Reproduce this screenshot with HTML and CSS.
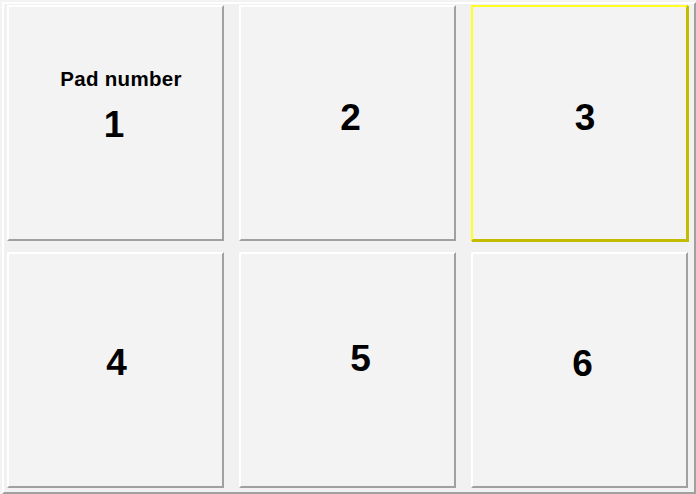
FILE: index.html
```html
<!DOCTYPE html>
<html>
<head>
<meta charset="utf-8">
<link rel="stylesheet" href="styles.css">
</head>
<body>
<div class="frame">
  <div class="grid">
    <div class="pad pad-1">
      <div class="label">Pad number</div>
      <div class="num">1</div>
    </div>
    <div class="pad pad-2"><div class="num">2</div></div>
    <div class="pad pad-3 selected"><div class="num">3</div></div>
    <div class="pad pad-4"><div class="num">4</div></div>
    <div class="pad pad-5"><div class="num">5</div></div>
    <div class="pad pad-6"><div class="num">6</div></div>
  </div>
</div>
</body>
</html>
```

FILE: styles.css
```css
html, body {
  margin: 0;
  padding: 0;
  background: #f3f3f3;
}
body {
  width: 696px;
  height: 494px;
  overflow: hidden;
  font-family: "Liberation Sans", Arial, sans-serif;
  color: #000;
}
.frame {
  margin: 2px 0 0 2px;
  width: 690px;
  height: 488px;
  border-style: solid;
  border-width: 2px;
  border-color: #ffffff #a0a0a0 #a0a0a0 #ffffff;
  background: #f1f1f1;
}
.grid {
  display: grid;
  grid-template-columns: 217px 217px 217px;
  grid-template-rows: 236px 236px;
  column-gap: 15px;
  row-gap: 11px;
  padding: 1px 0 0 3px;
}
.pad {
  box-sizing: border-box;
  background: #f3f3f3;
  border-style: solid;
  border-width: 2px;
  border-color: #ffffff #a0a0a0 #a0a0a0 #ffffff;
  display: flex;
  flex-direction: column;
  align-items: center;
  justify-content: center;
}
.pad.selected {
  border-color: #ffff22 #c2bb00 #c2bb00 #ffff22;
  box-shadow: 1px 1px 0 #c2bb00;
}
.num {
  font-size: 37px;
  font-weight: bold;
  line-height: 36px;
}
.label {
  font-size: 20.5px;
  font-weight: bold;
  line-height: 20px;
  letter-spacing: 0.3px;
}
.pad-1 .label { transform: translate(5.5px, -17px); }
.pad-1 .num { margin-top: 17.5px; transform: translate(-1.5px, -17px); }
.pad-2 .num { transform: translate(3px, -5.5px); }
.pad-3 .num { transform: translate(5.5px, -5.5px); }
.pad-4 .num { transform: translate(1px, -7.5px); }
.pad-5 .num { transform: translate(13px, -11.5px); }
.pad-6 .num { transform: translate(3px, -6.5px); }
```
